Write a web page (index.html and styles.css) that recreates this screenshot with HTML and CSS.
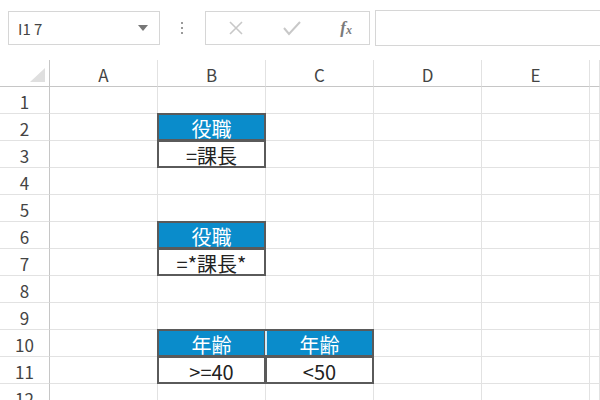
FILE: index.html
```html
<!DOCTYPE html>
<html lang="ja">
<head>
    <meta charset="UTF-8">
    <title>Excel - 条件</title>
    <link rel="stylesheet" href="styles.css">
</head>
<body>
    <div class="toolbar">
        <div class="namebox">
            <span>I1 7</span>
            <svg class="arrow" width="10" height="6" viewBox="0 0 10 6"><path d="M0 0 H10 L5 6 Z" fill="#777"/></svg>
        </div>
        <div class="dots"><i></i><i></i><i></i></div>
        <div class="fxbox">
            <svg width="16" height="16" viewBox="0 0 16 16"><path d="M2 2 L14 14 M14 2 L2 14" stroke="#c8c8c8" stroke-width="1.6" fill="none"/></svg>
            <svg width="18" height="16" viewBox="0 0 18 16"><path d="M1 8 L6 14 L17 2" stroke="#c8c8c8" stroke-width="2" fill="none"/></svg>
            <span class="fx">f<sub>x</sub></span>
        </div>
        <div class="formula"></div>
    </div>

    <div class="sheet">
        <div class="corner"><span class="tri"></span></div>
        <div class="colhead">A</div>
        <div class="colhead">B</div>
        <div class="colhead">C</div>
        <div class="colhead">D</div>
        <div class="colhead">E</div>
        <div class="colhead"></div>

        <div class="rowhead">1</div><div class="cell"></div><div class="cell"></div><div class="cell"></div><div class="cell"></div><div class="cell"></div><div class="cell"></div>
        <div class="rowhead">2</div><div class="cell"></div><div class="cell box head">役職</div><div class="cell"></div><div class="cell"></div><div class="cell"></div><div class="cell"></div>
        <div class="rowhead">3</div><div class="cell"></div><div class="cell box">=課長</div><div class="cell"></div><div class="cell"></div><div class="cell"></div><div class="cell"></div>
        <div class="rowhead">4</div><div class="cell"></div><div class="cell"></div><div class="cell"></div><div class="cell"></div><div class="cell"></div><div class="cell"></div>
        <div class="rowhead">5</div><div class="cell"></div><div class="cell"></div><div class="cell"></div><div class="cell"></div><div class="cell"></div><div class="cell"></div>
        <div class="rowhead">6</div><div class="cell"></div><div class="cell box head">役職</div><div class="cell"></div><div class="cell"></div><div class="cell"></div><div class="cell"></div>
        <div class="rowhead">7</div><div class="cell"></div><div class="cell box">=*課長*</div><div class="cell"></div><div class="cell"></div><div class="cell"></div><div class="cell"></div>
        <div class="rowhead">8</div><div class="cell"></div><div class="cell"></div><div class="cell"></div><div class="cell"></div><div class="cell"></div><div class="cell"></div>
        <div class="rowhead">9</div><div class="cell"></div><div class="cell"></div><div class="cell"></div><div class="cell"></div><div class="cell"></div><div class="cell"></div>
        <div class="rowhead">10</div><div class="cell"></div><div class="cell box head">年齢</div><div class="cell box head join">年齢</div><div class="cell"></div><div class="cell"></div><div class="cell"></div>
        <div class="rowhead">11</div><div class="cell"></div><div class="cell box">&gt;=40</div><div class="cell box">&lt;50</div><div class="cell"></div><div class="cell"></div><div class="cell"></div>
        <div class="rowhead">12</div><div class="cell"></div><div class="cell"></div><div class="cell"></div><div class="cell"></div><div class="cell"></div><div class="cell"></div>
    </div>
</body>
</html>
```

FILE: styles.css
```css
body {
    margin: 0;
    background: #fff;
    font-family: "Noto Sans CJK JP", "Noto Sans", sans-serif;
    color: #222;
    overflow: hidden;
}
/* Formula bar */
.toolbar {
    display: flex;
    align-items: center;
    height: 60px;
    padding: 0 0 4px 8px;
    box-sizing: border-box;
}
.namebox {
    display: flex;
    align-items: center;
    justify-content: space-between;
    width: 152px;
    height: 34px;
    box-sizing: border-box;
    border: 1px solid #d6d6d6;
    padding: 0 11px 0 9px;
    font-size: 15px;
    color: #444;
}
.dots {
    display: flex;
    flex-direction: column;
    gap: 3px;
    margin: 0 22px 0 21px;
}
.dots i {
    width: 2px;
    height: 2px;
    background: #9a9a9a;
}
.fxbox {
    display: flex;
    align-items: center;
    justify-content: space-between;
    width: 165px;
    height: 34px;
    box-sizing: border-box;
    border: 1px solid #d6d6d6;
    padding: 0 17px 0 22px;
}
.fx {
    font-family: "Liberation Serif", serif;
    font-style: italic;
    font-weight: bold;
    font-size: 17px;
    color: #7a7a7a;
}
.fx sub {
    font-size: 12px;
    vertical-align: -1px;
}
.formula {
    flex: 1;
    height: 34px;
    margin-left: 5px;
    border: 1px solid #d6d6d6;
    border-right: none;
}
/* Grid */
.sheet {
    display: grid;
    grid-template-columns: 50px repeat(5, 108px) 1fr;
    grid-template-rows: 27px repeat(12, 27px);
}
.corner {
    position: relative;
    border-right: 1px solid #c6c6c6;
    border-bottom: 1px solid #c6c6c6;
}
.tri {
    position: absolute;
    left: 30px;
    top: 8px;
    width: 0;
    height: 0;
    border-left: 15px solid transparent;
    border-bottom: 14px solid #dfdfdf;
}
.colhead {
    display: flex;
    align-items: center;
    justify-content: center;
    padding-top: 2px;
    font-size: 17px;
    color: #444;
    border-right: 1px solid #e2e2e2;
    border-bottom: 1px solid #c6c6c6;
}
.rowhead {
    display: flex;
    align-items: center;
    justify-content: center;
    padding-top: 3px;
    font-size: 17px;
    color: #444;
    border-right: 1px solid #c6c6c6;
    border-bottom: 1px solid #e2e2e2;
}
.cell {
    display: flex;
    align-items: center;
    justify-content: center;
    padding-top: 2px;
    border-right: 1px solid #e2e2e2;
    border-bottom: 1px solid #e2e2e2;
    font-size: 20px;
}
.box {
    position: relative;
}
.box::after {
    content: "";
    position: absolute;
    inset: -1px;
    border: 2px solid #5a5a5a;
    pointer-events: none;
}
.head {
    background: #0a8ccb;
    color: #fff;
}
/* light divider between adjacent header cells */
.join::before {
    content: "";
    position: absolute;
    left: -1px;
    top: 1px;
    bottom: 1px;
    width: 2px;
    background: #d4e9f5;
    z-index: 1;
}
```
